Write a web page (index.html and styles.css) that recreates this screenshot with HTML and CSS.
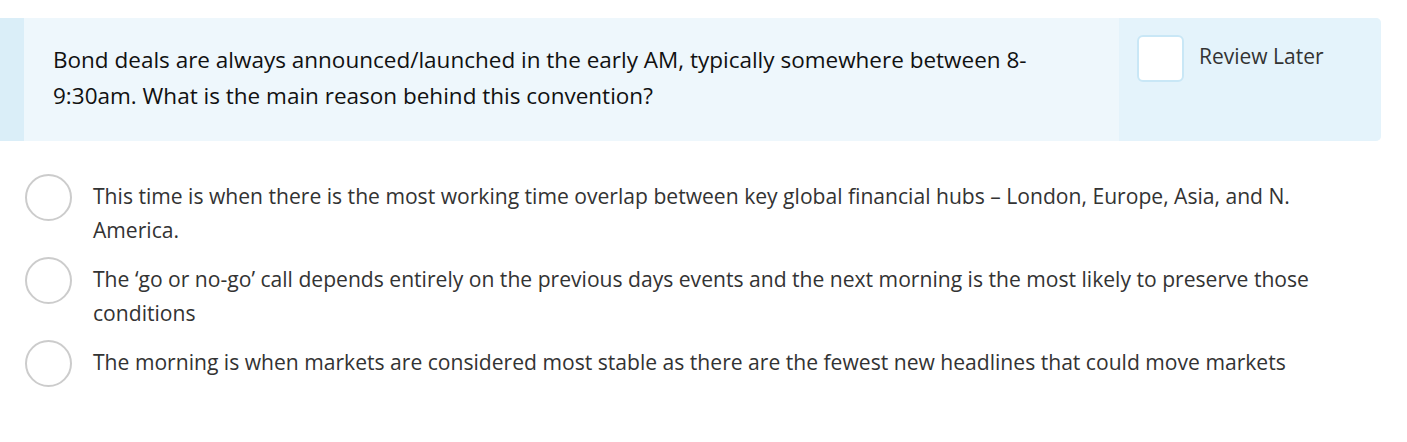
FILE: index.html
```html
<!DOCTYPE html>
<html lang="en">
<head>
<meta charset="utf-8">
<title>Question</title>
<link rel="stylesheet" href="styles.css">
</head>
<body>
<div class="page">
  <div class="card">
    <div class="stripe"></div>
    <div class="question">Bond deals are always announced/launched in the early AM, typically somewhere between 8-9:30am. What is the main reason behind this convention?</div>
    <div class="review">
      <span class="checkbox"></span>
      <span class="review-label">Review Later</span>
    </div>
  </div>
  <div class="options">
    <div class="option">
      <span class="radio"></span>
      <span class="option-text">This time is when there is the most working time overlap between key global financial hubs – London, Europe, Asia, and N. America.</span>
    </div>
    <div class="option">
      <span class="radio"></span>
      <span class="option-text">The ‘go or no-go’ call depends entirely on the previous days events and the next morning is the most likely to preserve those conditions</span>
    </div>
    <div class="option">
      <span class="radio"></span>
      <span class="option-text">The morning is when markets are considered most stable as there are the fewest new headlines that could move markets</span>
    </div>
  </div>
</div>
</body>
</html>
```
FILE: styles.css
```css
html, body {
  margin: 0;
  padding: 0;
  background: #ffffff;
}
body {
  font-family: "Open Sans", "Noto Sans", sans-serif;
}
.page {
  padding-top: 18px;
  width: 1381px;
}
.card {
  display: flex;
  height: 123px;
  border-radius: 0 5px 5px 0;
  overflow: hidden;
  background: #eef7fc;
}
.stripe {
  width: 24px;
  flex: none;
  background: #daeef8;
}
.question {
  width: 1095px;
  flex: none;
  box-sizing: border-box;
  padding: 24px 30px 0 29px;
  font-size: 22.5px;
  line-height: 36px;
  color: #111111;
  background: #eef7fc;
}
.review {
  flex: 1;
  display: flex;
  align-items: flex-start;
  gap: 15px;
  padding: 17px 0 0 18px;
  background: #e4f3fb;
}
.checkbox {
  width: 43px;
  height: 43px;
  flex: none;
  background: #ffffff;
  border: 2px solid #c9e7f6;
  border-radius: 6px;
}
.review-label {
  margin-top: 9px;
  font-size: 21px;
  line-height: 24px;
  color: #333333;
}
.options {
  display: flex;
  flex-direction: column;
  gap: 10px;
  padding: 33px 30px 0 25px;
}
.option {
  display: flex;
  align-items: flex-start;
  gap: 21px;
}
.radio {
  width: 43px;
  height: 43px;
  flex: none;
  border: 2px solid #cccccc;
  border-radius: 50%;
  background: #ffffff;
}
.option-text {
  margin-top: 5px;
  font-size: 21.1px;
  line-height: 34px;
  color: #333333;
}
```
